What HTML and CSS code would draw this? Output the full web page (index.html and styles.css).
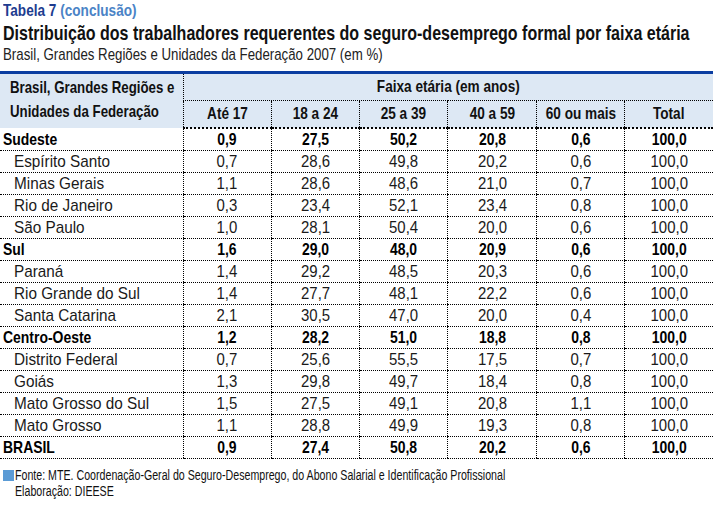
FILE: index.html
```html
<!DOCTYPE html>
<html lang="pt">
<head>
<meta charset="utf-8">
<link rel="stylesheet" href="styles.css">
</head>
<body>
<div class="page">
  <div class="caption">
    <div class="label"><span class="sq"><span class="num">Tabela 7</span> <span class="cont">(conclusão)</span></span></div>
    <h1 class="title"><span class="sq">Distribuição dos trabalhadores requerentes do seguro-desemprego formal por faixa etária</span></h1>
    <div class="subtitle"><span class="sq">Brasil, Grandes Regiões e Unidades da Federação 2007 (em %)</span></div>
  </div>
  <table class="data">
    <colgroup>
      <col class="c-name"><col><col><col><col><col><col>
    </colgroup>
    <thead>
      <tr class="h1">
        <th rowspan="2" class="hname"><span class="sq">Brasil, Grandes Regiões e<br>Unidades da Federação</span></th>
        <th colspan="6" class="hgroup"><span class="sq">Faixa etária (em anos)</span></th>
      </tr>
      <tr class="h2">
        <th><span class="sq">Até 17</span></th><th><span class="sq">18 a 24</span></th><th><span class="sq">25 a 39</span></th><th><span class="sq">40 a 59</span></th><th><span class="sq">60 ou mais</span></th><th><span class="sq">Total</span></th>
      </tr>
    </thead>
    <tbody>
      <tr class="region"><td><span class="sq">Sudeste</span></td><td><span class="sq">0,9</span></td><td><span class="sq">27,5</span></td><td><span class="sq">50,2</span></td><td><span class="sq">20,8</span></td><td><span class="sq">0,6</span></td><td><span class="sq">100,0</span></td></tr>
      <tr><td><span class="sq">Espírito Santo</span></td><td><span class="sq">0,7</span></td><td><span class="sq">28,6</span></td><td><span class="sq">49,8</span></td><td><span class="sq">20,2</span></td><td><span class="sq">0,6</span></td><td><span class="sq">100,0</span></td></tr>
      <tr><td><span class="sq">Minas Gerais</span></td><td><span class="sq">1,1</span></td><td><span class="sq">28,6</span></td><td><span class="sq">48,6</span></td><td><span class="sq">21,0</span></td><td><span class="sq">0,7</span></td><td><span class="sq">100,0</span></td></tr>
      <tr><td><span class="sq">Rio de Janeiro</span></td><td><span class="sq">0,3</span></td><td><span class="sq">23,4</span></td><td><span class="sq">52,1</span></td><td><span class="sq">23,4</span></td><td><span class="sq">0,8</span></td><td><span class="sq">100,0</span></td></tr>
      <tr><td><span class="sq">São Paulo</span></td><td><span class="sq">1,0</span></td><td><span class="sq">28,1</span></td><td><span class="sq">50,4</span></td><td><span class="sq">20,0</span></td><td><span class="sq">0,6</span></td><td><span class="sq">100,0</span></td></tr>
      <tr class="region"><td><span class="sq">Sul</span></td><td><span class="sq">1,6</span></td><td><span class="sq">29,0</span></td><td><span class="sq">48,0</span></td><td><span class="sq">20,9</span></td><td><span class="sq">0,6</span></td><td><span class="sq">100,0</span></td></tr>
      <tr><td><span class="sq">Paraná</span></td><td><span class="sq">1,4</span></td><td><span class="sq">29,2</span></td><td><span class="sq">48,5</span></td><td><span class="sq">20,3</span></td><td><span class="sq">0,6</span></td><td><span class="sq">100,0</span></td></tr>
      <tr><td><span class="sq">Rio Grande do Sul</span></td><td><span class="sq">1,4</span></td><td><span class="sq">27,7</span></td><td><span class="sq">48,1</span></td><td><span class="sq">22,2</span></td><td><span class="sq">0,6</span></td><td><span class="sq">100,0</span></td></tr>
      <tr><td><span class="sq">Santa Catarina</span></td><td><span class="sq">2,1</span></td><td><span class="sq">30,5</span></td><td><span class="sq">47,0</span></td><td><span class="sq">20,0</span></td><td><span class="sq">0,4</span></td><td><span class="sq">100,0</span></td></tr>
      <tr class="region"><td><span class="sq">Centro-Oeste</span></td><td><span class="sq">1,2</span></td><td><span class="sq">28,2</span></td><td><span class="sq">51,0</span></td><td><span class="sq">18,8</span></td><td><span class="sq">0,8</span></td><td><span class="sq">100,0</span></td></tr>
      <tr><td><span class="sq">Distrito Federal</span></td><td><span class="sq">0,7</span></td><td><span class="sq">25,6</span></td><td><span class="sq">55,5</span></td><td><span class="sq">17,5</span></td><td><span class="sq">0,7</span></td><td><span class="sq">100,0</span></td></tr>
      <tr><td><span class="sq">Goiás</span></td><td><span class="sq">1,3</span></td><td><span class="sq">29,8</span></td><td><span class="sq">49,7</span></td><td><span class="sq">18,4</span></td><td><span class="sq">0,8</span></td><td><span class="sq">100,0</span></td></tr>
      <tr><td><span class="sq">Mato Grosso do Sul</span></td><td><span class="sq">1,5</span></td><td><span class="sq">27,5</span></td><td><span class="sq">49,1</span></td><td><span class="sq">20,8</span></td><td><span class="sq">1,1</span></td><td><span class="sq">100,0</span></td></tr>
      <tr><td><span class="sq">Mato Grosso</span></td><td><span class="sq">1,1</span></td><td><span class="sq">28,8</span></td><td><span class="sq">49,9</span></td><td><span class="sq">19,3</span></td><td><span class="sq">0,8</span></td><td><span class="sq">100,0</span></td></tr>
      <tr class="region"><td><span class="sq">BRASIL</span></td><td><span class="sq">0,9</span></td><td><span class="sq">27,4</span></td><td><span class="sq">50,8</span></td><td><span class="sq">20,2</span></td><td><span class="sq">0,6</span></td><td><span class="sq">100,0</span></td></tr>
    </tbody>
  </table>
  <div class="notes">
    <div class="source"><span class="bullet"></span><span class="sq">Fonte: MTE. Coordenação-Geral do Seguro-Desemprego, do Abono Salarial e Identificação Profissional</span></div>
    <div class="credit"><span class="sq">Elaboração: DIEESE</span></div>
  </div>
</div>
</body>
</html>
```
FILE: styles.css
```css
html, body {
  margin: 0;
  padding: 0;
  background: #ffffff;
}
body {
  font-family: "Liberation Sans", Arial, sans-serif;
  color: #111;
}
.sq {
  display: inline-block;
  white-space: nowrap;
  transform-origin: left center;
}
.page {
  width: 713px;
  overflow: hidden;
}
.caption {
  padding-left: 3px;
}
.label {
  font-weight: bold;
  font-size: 17px;
  line-height: 22px;
}
.label .sq { transform: scaleX(0.8); }
.label .num { color: #1d3c8f; }
.label .cont { color: #4a83c6; }
.title {
  margin: 0;
  font-size: 21px;
  line-height: 22px;
  font-weight: bold;
  color: #111;
}
.title .sq { transform: scaleX(0.763); }
.subtitle {
  font-size: 17px;
  line-height: 22px;
  color: #222;
}
.subtitle .sq { transform: scaleX(0.78); }
.data {
  margin-top: 5px;
  width: 713px;
  border-collapse: collapse;
  border-top: 3px solid #0b3ea1;
  table-layout: fixed;
  font-size: 17px;
}
.c-name { width: 183px; }
.data th {
  background: #dde8f4;
  font-weight: bold;
  padding: 0;
  height: 26px;
  border-left: 1px dotted #000;
  color: #111;
}
.data th .sq {
  transform: scaleX(0.8);
  transform-origin: center center;
}
.data th.hname {
  border-left: none;
  text-align: left;
  padding: 0 0 2px 10px;
  line-height: 24px;
  vertical-align: middle;
}
.data th.hname .sq {
  transform: scaleX(0.78);
  transform-origin: left center;
}
.data th.hgroup {
  border-bottom: 1px dotted #000;
}
.data thead tr.h2 th {
  border-bottom: 2px dotted #000;
}
.data td {
  height: 21px;
  padding: 0;
  text-align: center;
  border-bottom: 1px dotted #000;
  border-left: 1px dotted #000;
  line-height: 21px;
  color: #1a1a1a;
}
.data td .sq {
  transform: scaleX(0.88);
  transform-origin: center center;
}
.data td:first-child {
  border-left: none;
  text-align: left;
  padding-left: 14px;
}
.data td:first-child .sq {
  transform: scaleX(0.9);
  transform-origin: left center;
}
.data tr.region td {
  font-weight: bold;
  color: #000;
}
.data tr.region td .sq {
  transform: scaleX(0.82);
}
.data tr.region td:first-child {
  padding-left: 3px;
}
.notes {
  margin-top: 8px;
  padding-left: 3px;
  font-size: 14px;
  line-height: 16px;
  color: #111;
}
.notes .sq { transform: scaleX(0.76); }
.bullet {
  display: inline-block;
  width: 11px;
  height: 11px;
  background: #5b9bd5;
  margin-right: 1px;
  vertical-align: -1px;
}
.credit {
  padding-left: 12px;
}
```
